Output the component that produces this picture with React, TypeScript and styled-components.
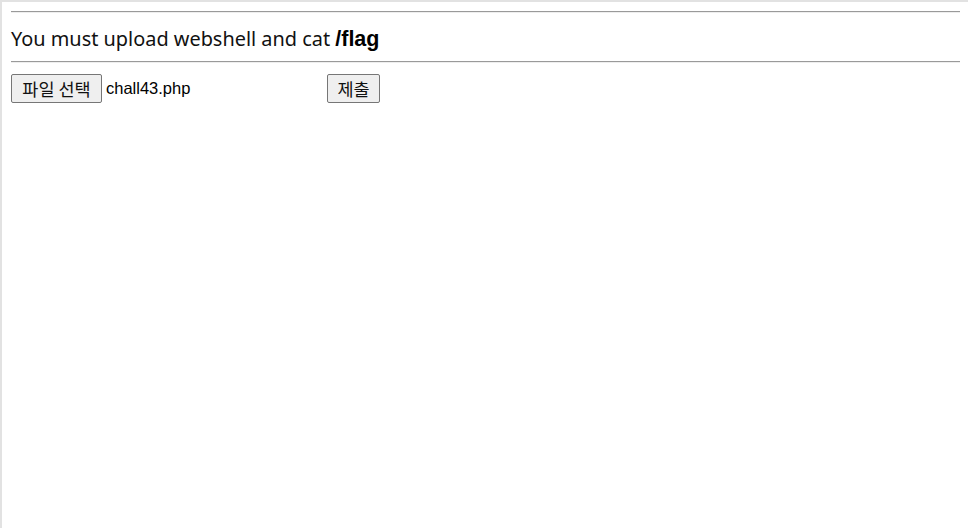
import React from "react";
import styled, { createGlobalStyle } from "styled-components";

const Global = createGlobalStyle`
  html, body { margin: 0; padding: 0; background: #fff; }
  body { font-family: "Liberation Sans", Arial, sans-serif; }
`;

const Frame = styled.div`
  box-sizing: border-box;
  width: 968px;
  height: 528px;
  border-top: 2px solid #e2e2e2;
  border-left: 2px solid #e2e2e2;
  padding: 9px 8px 8px 9px;
  overflow: hidden;
`;

const Rule = styled.hr`
  margin: 0;
  height: 0;
  border: none;
  border-top: 1px solid #9a9a9a;
  border-bottom: 1px solid #eeeeee;
`;

const Heading = styled.div`
  margin: 8px 0;
  height: 32px;
  line-height: 35px;
  font-family: "Noto Sans", "Noto Sans CJK KR", sans-serif;
  font-size: 19.9px;
  color: #111;
  white-space: nowrap;
`;

const Flag = styled.b`
  font-family: "Liberation Sans", Arial, sans-serif;
  font-weight: bold;
  font-size: 21.5px;
  color: #000;
`;

const Form = styled.form`
  margin-top: 11px;
  display: flex;
  align-items: center;
`;

const Button = styled.button<{ $w: number }>`
  box-sizing: border-box;
  width: ${(p) => p.$w}px;
  height: 29px;
  padding: 0;
  margin: 0;
  border: 1px solid #767676;
  border-radius: 2px;
  background: #efefef;
  font-family: "Noto Sans CJK KR", "Noto Sans", sans-serif;
  font-size: 17.5px;
  color: #111;
  line-height: 1;
`;

const FileName = styled.span<{ $w: number }>`
  width: ${(p) => p.$w}px;
  padding-left: 4px;
  box-sizing: border-box;
  font-family: "Liberation Sans", Arial, sans-serif;
  font-size: 16.5px;
  color: #000;
`;

export default function App() {
  return (
    <>
      <Global />
      <Frame>
        <Rule />
        <Heading>
          You must upload webshell and cat <Flag>/flag</Flag>
        </Heading>
        <Rule />
        <Form onSubmit={(e) => e.preventDefault()}>
          <Button type="button" $w={91}>파일 선택</Button>
          <FileName $w={225}>chall43.php</FileName>
          <Button type="submit" $w={53}>제출</Button>
        </Form>
      </Frame>
    </>
  );
}
